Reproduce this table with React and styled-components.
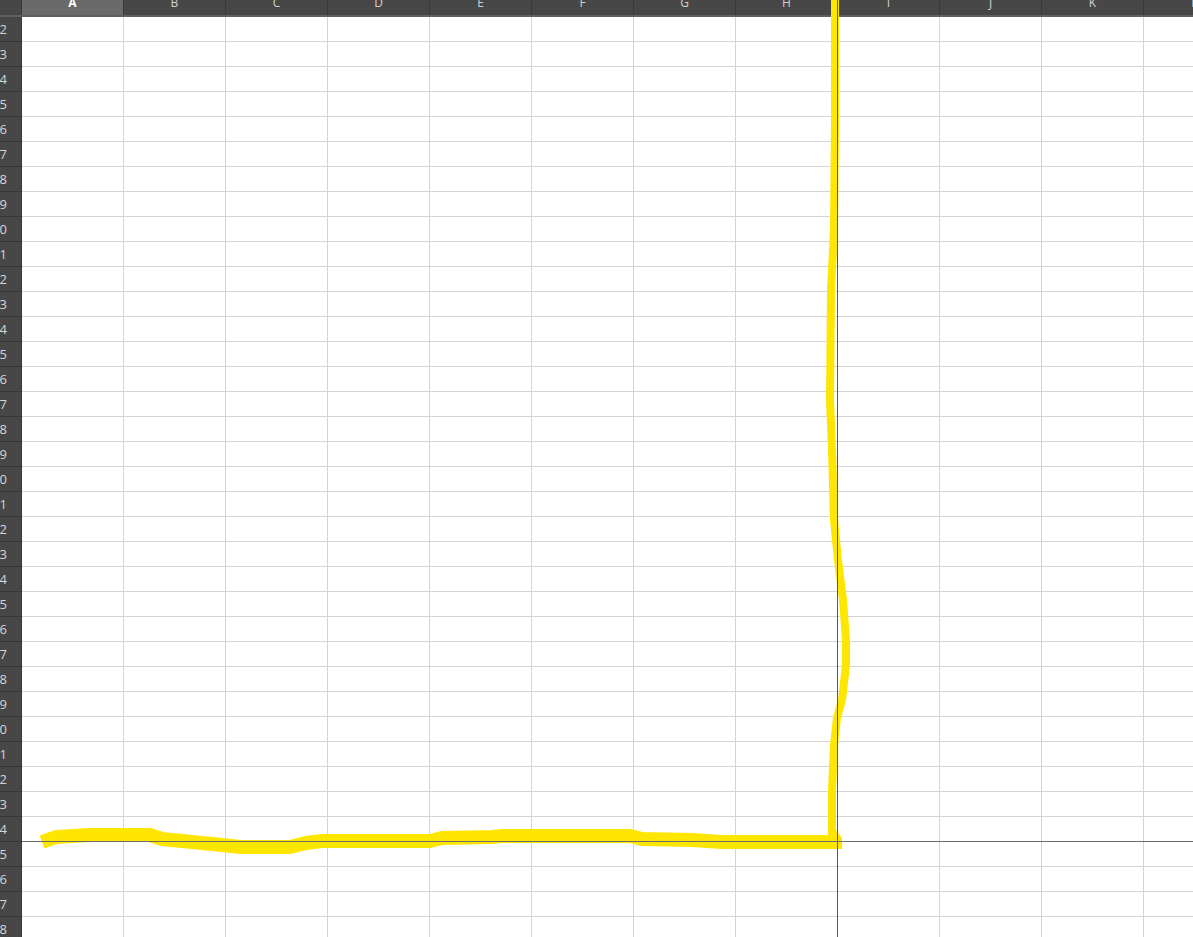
import React from 'react';
import styled, { createGlobalStyle } from 'styled-components';

const GlobalStyle = createGlobalStyle`
  html, body {
    margin: 0;
    padding: 0;
    background: #fff;
    overflow: hidden;
  }
  * { box-sizing: border-box; }
`;

const COLS = ['A', 'B', 'C', 'D', 'E', 'F', 'G', 'H', 'I', 'J', 'K', 'L'];
const ROWS = Array.from({ length: 37 }, (_, i) => 12 + i);
const SPLIT_COL = 'H';
const SPLIT_ROW = 44;

const Sheet = styled.div`
  position: relative;
  width: 1193px;
  height: 937px;
  overflow: hidden;
  font-family: "Open Sans", "Noto Sans", "DejaVu Sans", sans-serif;
`;

const Grid = styled.div`
  display: grid;
  grid-template-columns: 22px repeat(12, 102px);
`;

const HeaderRow = styled(Grid)`
  height: 17px;
  background: #474747;
  border-bottom: 2px solid #5f5f5f;
`;

const Corner = styled.div`
  background: #474747;
  border-right: 1px solid #3a3a3a;
`;

const ColHeader = styled.div`
  display: flex;
  justify-content: center;
  align-items: flex-start;
  overflow: hidden;
  background: ${p => (p.$active ? '#6a6a6a' : '#474747')};
  border-right: 1px solid ${p => (p.$split ? '#2c2c2c' : '#3a3a3a')};
  color: ${p => (p.$active ? '#ffffff' : '#d2d2d2')};
  font-size: 12px;
  font-weight: ${p => (p.$active ? 700 : 400)};
`;

const Letter = styled.span`
  line-height: 12px;
  margin-top: -3px;
`;

const Row = styled(Grid)`
  height: 25px;
`;

const RowHead = styled.div`
  display: flex;
  justify-content: flex-end;
  align-items: center;
  overflow: hidden;
  padding-right: 14px;
  background: #474747;
  border-right: 1px solid #3a3a3a;
  border-bottom: 1px solid #363636;
  color: #d6d6d6;
  font-size: 13px;
`;

const Cell = styled.div`
  border-right: 1px solid ${p => (p.$split ? '#6c6c6c' : '#d4d4d4')};
  border-bottom: 1px solid ${p => (p.$splitRow ? '#6c6c6c' : '#d4d4d4')};
`;

const Ink = styled.svg`
  position: absolute;
  left: 0;
  top: 0;
  pointer-events: none;
`;

const vertical = [
  [835, -2], [835, 120], [834, 230], [831, 290], [830, 400], [832, 450],
  [834, 520], [838, 560], [843, 600], [846, 640], [846, 665], [842, 700],
  [837, 718], [834, 745], [832, 790], [832, 836],
];

const horizontal = [
  [42, 842], [56, 837], [90, 835], [150, 835], [162, 839], [222, 845],
  [240, 847], [290, 847], [306, 843], [322, 841], [430, 841], [442, 838],
  [492, 837], [502, 836], [630, 836], [642, 839], [692, 840], [722, 842],
  [742, 842], [839, 842],
];

const toPoints = pts => pts.map(p => p.join(',')).join(' ');

const Highlight = () => (
  <Ink width="1193" height="937" viewBox="0 0 1193 937">
    <polyline
      points={toPoints(vertical)}
      fill="none"
      stroke="#ffe600"
      strokeWidth="8"
      strokeLinejoin="round"
    />
    <polyline
      points={toPoints(horizontal)}
      fill="none"
      stroke="#ffe600"
      strokeWidth="14"
      strokeLinejoin="round"
    />
    <polygon points="828,828 836,830 842,838 842,849 828,849" fill="#ffe600" />
    <line x1="837.5" y1="0" x2="837.5" y2="937" stroke="#5a5a5a" strokeWidth="1" />
    <line x1="22" y1="841.5" x2="1193" y2="841.5" stroke="#6c6c6c" strokeWidth="1" />
  </Ink>
);

export default function App() {
  return (
    <>
      <GlobalStyle />
      <Sheet>
        <HeaderRow>
          <Corner />
          {COLS.map(c => (
            <ColHeader key={c} $active={c === 'A'} $split={c === SPLIT_COL}>
              <Letter>{c}</Letter>
            </ColHeader>
          ))}
        </HeaderRow>
        {ROWS.map(r => (
          <Row key={r}>
            <RowHead>{r}</RowHead>
            {COLS.map(c => (
              <Cell key={c} $split={c === SPLIT_COL} $splitRow={r === SPLIT_ROW} />
            ))}
          </Row>
        ))}
        <Highlight />
      </Sheet>
    </>
  );
}
